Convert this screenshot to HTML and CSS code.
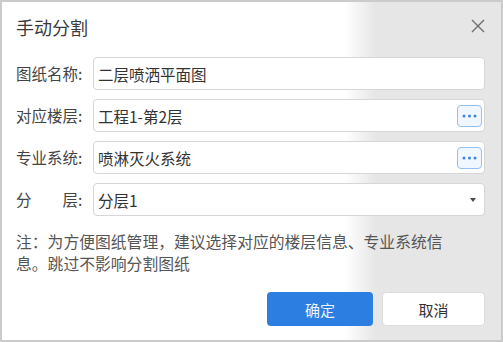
FILE: index.html
```html
<!DOCTYPE html>
<html>
<head>
  <title>手动分割</title>
  <link rel="stylesheet" href="styles.css">
</head>
<body>
  <div class="dialog">
    <div class="dialog-header">
      <span class="dialog-title">手动分割</span>
      <button class="close-btn" title="关闭">
        <svg width="14" height="14" viewBox="0 0 14 14"><path d="M1 1L13 13M13 1L1 13" stroke="#6e6e6e" stroke-width="1.4" fill="none"/></svg>
      </button>
    </div>

    <div class="form">
      <label class="form-label">图纸名称:</label>
      <div class="field"><span class="field-text">二层喷洒平面图</span></div>

      <label class="form-label">对应楼层:</label>
      <div class="field">
        <span class="field-text">工程1-第2层</span>
        <button class="more-btn">
          <svg width="15" height="4" viewBox="0 0 15 4"><circle cx="2" cy="2" r="1.5"/><circle cx="7.5" cy="2" r="1.5"/><circle cx="13" cy="2" r="1.5"/></svg>
        </button>
      </div>

      <label class="form-label">专业系统:</label>
      <div class="field">
        <span class="field-text">喷淋灭火系统</span>
        <button class="more-btn">
          <svg width="15" height="4" viewBox="0 0 15 4"><circle cx="2" cy="2" r="1.5"/><circle cx="7.5" cy="2" r="1.5"/><circle cx="13" cy="2" r="1.5"/></svg>
        </button>
      </div>

      <label class="form-label">分　　层:</label>
      <div class="field select">
        <span class="field-text">分层1</span>
        <span class="caret"></span>
      </div>
    </div>

    <p class="note">注：为方便图纸管理，建议选择对应的楼层信息、专业系统信息。跳过不影响分割图纸</p>

    <div class="footer">
      <button class="btn btn-primary">确定</button>
      <button class="btn btn-cancel">取消</button>
    </div>
  </div>
</body>
</html>
```

FILE: styles.css
```css
html, body {
  margin: 0;
  padding: 0;
}

body {
  font-family: "Noto Sans CJK SC", "Liberation Sans", sans-serif;
  color: #3c3c3c;
}

.dialog {
  width: 503px;
  height: 342px;
  box-sizing: border-box;
  border: 2px solid #cbcbcb;
  padding: 0 16px 14px 14px;
  display: flex;
  flex-direction: column;
  background: linear-gradient(to right, #fff 0, #fff 342px, #e6e6e6 374px, #e6e6e6 100%);
}

.dialog-header {
  display: flex;
  justify-content: space-between;
  align-items: flex-start;
  height: 55px;
}

.dialog-title {
  font-size: 18px;
  line-height: 26px;
  padding-top: 12px;
  color: #3a3a3a;
}

.close-btn {
  width: 14px;
  height: 14px;
  margin-top: 17px;
  padding: 0;
  border: none;
  background: none;
  display: flex;
  cursor: pointer;
}

.form {
  display: grid;
  grid-template-columns: 77px 1fr;
  row-gap: 9px;
}

.form-label {
  font-size: 15.5px;
  line-height: 33px;
  white-space: nowrap;
  color: #444;
}

.field {
  height: 33px;
  box-sizing: border-box;
  border: 1px solid #d6d6d6;
  border-radius: 4px;
  background-color: #fff;
  padding: 0 2px 0 4px;
  display: flex;
  align-items: center;
  justify-content: space-between;
}

.field-text {
  font-size: 15.5px;
  color: #333;
}

.more-btn {
  width: 25px;
  height: 22px;
  box-sizing: border-box;
  border: 1px solid #95c0f2;
  border-radius: 4px;
  background-color: #f1f7fe;
  padding: 0;
  display: flex;
  align-items: center;
  justify-content: center;
  fill: #3b85e5;
  cursor: pointer;
}

.select .caret {
  width: 0;
  height: 0;
  margin-right: 6px;
  border-left: 3.5px solid transparent;
  border-right: 3.5px solid transparent;
  border-top: 4px solid #4a4a4a;
}

.note {
  margin: 15px 0 0;
  max-width: 436px;
  font-size: 15.8px;
  line-height: 22px;
  color: #555;
}

.footer {
  margin-top: auto;
  display: flex;
  justify-content: flex-end;
  gap: 9px;
}

.btn {
  height: 34px;
  border-radius: 4px;
  font-family: inherit;
  font-size: 15px;
  cursor: pointer;
}

.btn-primary {
  width: 106px;
  border: none;
  background-color: #2d7ee1;
  color: #eef4fc;
}

.btn-cancel {
  width: 103px;
  border: 1px solid #dcdcdc;
  background-color: #fff;
  color: #333;
}
```
